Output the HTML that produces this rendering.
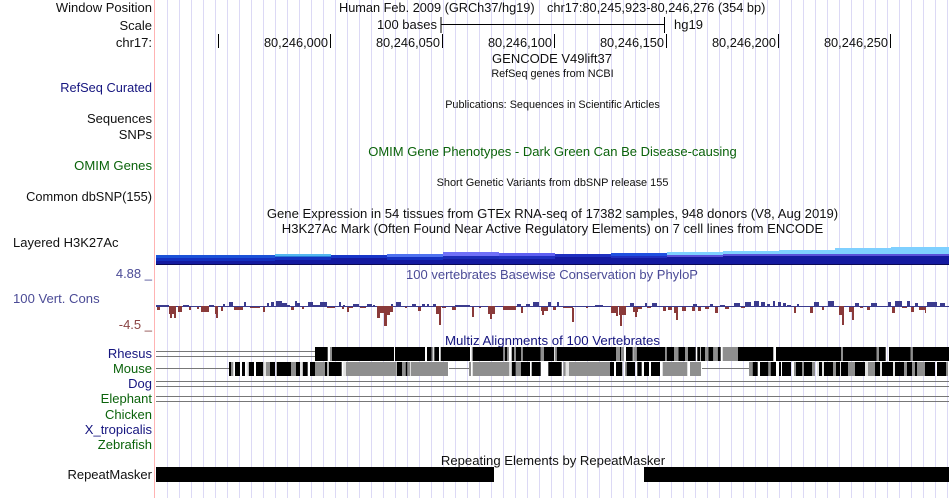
<!DOCTYPE html>
<html><head><meta charset="utf-8"><style>
html,body{margin:0;padding:0;background:#fff}
svg{display:block}
text{font-family:"Liberation Sans",sans-serif;font-size:13px;fill:#111}
.r{text-anchor:end}
.m{text-anchor:middle}
.s{font-size:10.85px}
.t{font-size:12.8px}
.h{font-size:12.75px}
.w{font-size:13.1px}
.b{fill:#15157f}
.g{fill:#0b630b}
.v{fill:#4b4b96}
.d{fill:#8a4444}
</style></head><body>
<svg width="950" height="498" viewBox="0 0 950 498" xmlns="http://www.w3.org/2000/svg">
<path stroke="#dcd9f5" stroke-width="1" fill="none" d="M167.5 0V498M179.5 0V498M191.5 0V498M203.5 0V498M215.5 0V498M227.5 0V498M239.5 0V498M251.5 0V498M263.5 0V498M275.5 0V498M287.5 0V498M299.5 0V498M311.5 0V498M323.5 0V498M335.5 0V498M347.5 0V498M359.5 0V498M371.5 0V498M383.5 0V498M395.5 0V498M407.5 0V498M419.5 0V498M431.5 0V498M443.5 0V498M455.5 0V498M467.5 0V498M479.5 0V498M491.5 0V498M503.5 0V498M515.5 0V498M527.5 0V498M539.5 0V498M551.5 0V498M563.5 0V498M575.5 0V498M587.5 0V498M599.5 0V498M611.5 0V498M623.5 0V498M635.5 0V498M647.5 0V498M659.5 0V498M671.5 0V498M683.5 0V498M695.5 0V498M707.5 0V498M719.5 0V498M731.5 0V498M743.5 0V498M755.5 0V498M767.5 0V498M779.5 0V498M791.5 0V498M803.5 0V498M815.5 0V498M827.5 0V498M839.5 0V498M851.5 0V498M863.5 0V498M875.5 0V498M887.5 0V498M899.5 0V498M911.5 0V498M923.5 0V498M935.5 0V498M947.5 0V498"/>
<rect x="154" y="0" width="1" height="498" fill="#ffb3b3"/>

<text class="r" x="152" y="12">Window Position</text>
<text class="r" x="152" y="30">Scale</text>
<text class="r" x="152" y="47">chr17:</text>
<text class="h" x="339" y="12">Human Feb. 2009 (GRCh37/hg19)</text>
<text class="h" x="547" y="12">chr17:80,245,923-80,246,276 (354 bp)</text>
<text class="r" x="437" y="29">100 bases</text>
<text x="674" y="29">hg19</text>
<path stroke="#000" fill="none" d="M441 17V33M441 24.500H664M664.500 17V33M218.500 34V48M330.500 34V48M442.500 34V48M554.500 34V48M666.500 34V48M778.500 34V48M890.500 34V48"/>
<text class="r t" x="328" y="47">80,246,000</text>
<text class="r t" x="440" y="47">80,246,050</text>
<text class="r t" x="552" y="47">80,246,100</text>
<text class="r t" x="664" y="47">80,246,150</text>
<text class="r t" x="776" y="47">80,246,200</text>
<text class="r t" x="888" y="47">80,246,250</text>

<text class="m" x="552" y="63">GENCODE V49lift37</text>
<text class="m s" x="552.500" y="77">RefSeq genes from NCBI</text>
<text class="r b t" x="152" y="92">RefSeq Curated</text>
<text class="m s" x="552.500" y="108">Publications: Sequences in Scientific Articles</text>
<text class="r" x="152" y="123">Sequences</text>
<text class="r" x="152" y="139">SNPs</text>
<text class="m g" x="552.500" y="156">OMIM Gene Phenotypes - Dark Green Can Be Disease-causing</text>
<text class="r g w" x="152" y="170">OMIM Genes</text>
<text class="m s" x="552.500" y="186" style="font-size:10.95px">Short Genetic Variants from dbSNP release 155</text>
<text class="r t" x="152" y="201">Common dbSNP(155)</text>
<text class="m w" x="552.500" y="218">Gene Expression in 54 tissues from GTEx RNA-seq of 17382 samples, 948 donors (V8, Aug 2019)</text>
<text class="m w" x="552.500" y="233">H3K27Ac Mark (Often Found Near Active Regulatory Elements) on 7 cell lines from ENCODE</text>
<text x="13" y="247">Layered H3K27Ac</text>

<!-- layered track -->
<rect x="156" y="255" width="793" height="9" fill="#141aa0"/>
<path fill="#1c52d8" d="M156 255h119v3h-119z"/>
<path fill="#1430c0" d="M156 258h119v3h-119zM275 257h56v3h-56zM387 257h56v3h-56z"/>
<path fill="#55b8f0" d="M275 254h56v2h-56z"/>
<path fill="#2a7ad8" d="M275 256h56v1h-56z"/>
<path fill="#1836c8" d="M331 255h56v3h-56z"/>
<path fill="#4f72f0" d="M387 254h56v3h-56z"/>
<path fill="#7070f8" d="M443 252h56v4h-56z"/>
<path fill="#1c2cb8" d="M443 256h56v3h-56z"/>
<path fill="#5f60f2" d="M499 253h56v3h-56z"/>
<path fill="#2030c0" d="M499 256h56v3h-56zM555 254h56v3h-56z"/>
<path fill="#2050e0" d="M611 253h56v3h-56z"/>
<path fill="#2030c0" d="M611 256h56v2h-56z"/>
<path fill="#7fd0ff" d="M667 252h56v3h-56zM723 251h56v3h-56zM779 250h56v4h-56zM835 248h56v6h-56zM891 247h58v7h-58z"/>
<path fill="#5a50d8" d="M667 255h56v2h-56zM723 254h56v2h-56zM779 254h56v2h-56zM835 254h56v2h-56zM891 254h58v2h-58z"/>
<rect x="156" y="264" width="793" height="1" fill="#0a0a55"/>

<text class="r v" x="152" y="278">4.88 _</text>
<text class="m v" x="552" y="279">100 vertebrates Basewise Conservation by PhyloP</text>
<text class="v w" x="13" y="303">100 Vert. Cons</text>
<text class="r d" x="152" y="329">-4.5 _</text>

<!-- wiggle baseline -->
<rect x="156" y="306" width="793" height="1" fill="#3b3b8e"/>
<!-- wiggle blue -->
<path fill="#3b3b8e" d="M156 305h13v2h-13zM176 306h3v1h-3zM183 305h6v2h-6zM192 306h7v1h-7zM200 306h4v1h-4zM209 305h5v2h-5zM219 306h4v1h-4zM223 304h2v3h-2zM229 302h4v5h-4zM233 306h11v1h-11zM244 302h2v5h-2zM247 306h18v1h-18zM267 303h2v4h-2zM271 302h3v5h-3zM276 301h6v6h-6zM282 303h5v4h-5zM287 305h3v2h-3zM295 301h2v6h-2zM297 303h3v4h-3zM302 306h3v1h-3zM308 302h5v5h-5zM313 305h7v2h-7zM320 302h7v5h-7zM339 302h2v5h-2zM343 305h2v2h-2zM353 304h6v3h-6zM367 304h5v3h-5zM373 305h2v2h-2zM391 304h2v3h-2zM396 302h5v5h-5zM403 306h6v1h-6zM412 304h4v3h-4zM422 304h3v3h-3zM427 304h2v3h-2zM433 304h3v3h-3zM447 306h5v1h-5zM455 305h15v2h-15zM477 306h6v1h-6zM517 304h4v3h-4zM526 304h4v3h-4zM533 302h6v5h-6zM548 302h3v5h-3zM552 306h3v1h-3zM557 302h2v5h-2zM580 306h7v1h-7zM595 305h8v2h-8zM605 306h5v1h-5zM630 303h4v4h-4zM645 303h2v4h-2zM652 303h5v4h-5zM660 306h2v1h-2zM665 306h3v1h-3zM680 306h5v1h-5zM693 304h4v3h-4zM710 304h3v3h-3zM720 305h5v2h-5zM734 303h6v4h-6zM745 302h6v5h-6zM754 301h5v6h-5zM761 302h4v5h-4zM767 304h3v3h-3zM773 301h2v6h-2zM778 302h3v5h-3zM783 303h3v4h-3zM787 305h4v2h-4zM797 304h2v3h-2zM800 306h7v1h-7zM814 302h5v5h-5zM828 301h6v6h-6zM855 303h4v4h-4zM871 303h6v4h-6zM879 306h7v1h-7zM888 302h3v5h-3zM895 301h7v6h-7zM907 301h3v6h-3zM915 303h3v4h-3zM927 302h10v5h-10zM940 303h5v4h-5zM947 306h2v1h-2z"/>
<!-- wiggle red -->
<path fill="#8a3a3a" d="M157 307h3v3h-3zM169 306h7v8h-7zM170 314h2v4h-2zM174 314h2v4h-2zM178 306h4v6h-4zM189 307h2v3h-2zM197 307h2v2h-2zM201 306h8v6h-8zM215 306h3v8h-3zM216 314h2v4h-2zM221 307h2v4h-2zM234 307h9v3h-9zM250 307h10v1h-10zM263 307h2v5h-2zM291 307h3v3h-3zM302 307h2v2h-2zM327 307h8v1h-8zM342 307h2v2h-2zM347 307h2v5h-2zM349 307h4v1h-4zM360 307h6v1h-6zM377 306h3v12h-3zM380 306h4v7h-4zM384 306h3v20h-3zM387 306h3v9h-3zM390 306h3v6h-3zM405 307h2v1h-2zM418 307h3v4h-3zM436 306h5v8h-5zM439 314h2v11h-2zM442 307h4v1h-4zM452 307h4v3h-4zM472 307h2v10h-2zM479 307h2v1h-2zM488 306h7v8h-7zM490 314h2v5h-2zM503 306h13v4h-13zM521 307h2v6h-2zM541 307h7v4h-7zM542 311h2v4h-2zM553 307h3v3h-3zM563 307h10v1h-10zM572 308h2v14h-2zM586 307h2v1h-2zM611 306h7v7h-7zM616 313h2v3h-2zM619 306h7v9h-7zM620 315h2v11h-2zM633 307h5v5h-5zM635 312h2v5h-2zM638 307h4v2h-4zM647 307h4v1h-4zM663 307h3v4h-3zM668 307h4v3h-4zM674 307h4v6h-4zM676 313h2v7h-2zM682 307h4v4h-4zM692 307h3v4h-3zM698 307h3v4h-3zM705 307h4v2h-4zM715 307h3v6h-3zM725 307h4v2h-4zM741 307h4v1h-4zM794 307h2v6h-2zM810 307h3v6h-3zM822 307h2v3h-2zM839 306h5v9h-5zM842 315h2v10h-2zM849 307h3v5h-3zM852 307h2v13h-2zM860 307h3v1h-3zM867 307h3v3h-3zM892 307h3v6h-3zM902 307h5v1h-5zM911 307h3v5h-3zM919 307h6v3h-6zM925 307h1v6h-1z"/>

<text class="m b" x="552.500" y="345" style="font-size:13.25px">Multiz Alignments of 100 Vertebrates</text>
<text class="r b" x="152" y="358">Rhesus</text>
<text class="r g" x="152" y="373">Mouse</text>
<text class="r b" x="152" y="388">Dog</text>
<text class="r g" x="152" y="403">Elephant</text>
<text class="r g" x="152" y="419">Chicken</text>
<text class="r b" x="152" y="434">X_tropicalis</text>
<text class="r g" x="152" y="449">Zebrafish</text>

<path stroke="#777" stroke-width="1" fill="none" d="M156 351.500H315M156 356.500H315M156 368.500H229M449 368.500H469M702 368.500H749M156 381.500H949M156 386.500H949M156 396.500H949M156 401.500H949"/>
<!-- rhesus -->
<path stroke="#000" stroke-width="14" fill="none" d="M315 354H327.700M332 354H394M395 354H425M427 354H431.700M434.300 354H439M440.700 354H470M472.700 354H503.300M505 354H507.300M511.700 354H514M516 354H521M522.700 354H540.700M544 354H554M556.700 354H616M620 354H621M626 354H632.700M636.700 354H665M666.700 354H674M678.300 354H685M688 354H695.700M697.300 354H700M700.700 354H705M708.300 354H713.300M717.700 354H720.700M738 354H773.300M776 354H841M843 354H876.700M879 354H885.700M889 354H910.700M912.700 354H949"/>
<path stroke="#8f8f8f" stroke-width="14" fill="none" d="M330 354H332M431.700 354H433.300M471.700 354H472.700M503.300 354H505M507.300 354H509M514 354H516M521 354H522.700M540.700 354H544M554.700 354H556.700M616 354H620M621 354H624M633.300 354H636.700M665 354H666.700M674 354H678.300M685 354H688M705 354H708.300M713.300 354H717.700M722.700 354H738M841 354H843M876.700 354H879M910.700 354H912.700"/>
<!-- mouse -->
<path stroke="#8f8f8f" stroke-width="14" fill="none" d="M231 369H233.300M266 369H270M291 369H296M315 369H325M346 369H396.700M402 369H405.700M407.300 369H410M410.700 369H448M469 369H471M472.700 369H509.300M515.700 369H521M563.300 369H565.700M569 369H610M625 369H626.700M662.700 369H687.300M690 369H701M749 369H752.700M768.300 369H770.700M794 369H796M802 369H804M812 369H815M833 369H836M848 369H855M868 369H875M904 369H907M912 369H915M917 369H925M946 369H948"/>
<path stroke="#000" stroke-width="14" fill="none" d="M229 369H231M235 369H240M242 369H245M248.700 369H254M256 369H263.300M270 369H275M276.700 369H291M296 369H300M302.700 369H307.700M310 369H315M325 369H327.300M328.700 369H334.300M334.300 369H341.700M397 369H402M405.700 369H407.300M511.700 369H515.700M521 369H530M531.700 369H540.700M548.300 369H561.700M610 369H614M616 369H622.300M626.700 369H635M637.300 369H641.700M644 369H649M651 369H660M752.700 369H757.700M760 369H768.300M770.700 369H776M779 369H781M782 369H791M796 369H802M804 369H812M819 369H822M824 369H833M836 369H840M841 369H848M855 369H865M875 369H880M882 369H893M895 369H904M907 369H912M915 369H917M925 369H935M937 369H946"/>
<path stroke="#e2e2e2" stroke-width="14" fill="none" d="M246.700 369H248.700M263.300 369H266M300 369H302.700M343.300 369H346M509.300 369H511.700M565.700 369H569M817 369H819M822 369H824M840 369H841M865 369H868M880 369H882M893 369H895"/>

<text class="m w" x="553" y="465">Repeating Elements by RepeatMasker</text>
<text class="r" x="152" y="479">RepeatMasker</text>
<rect x="156" y="467" width="338" height="15" fill="#000"/>
<rect x="644" y="467" width="305" height="15" fill="#000"/>
</svg>
</body></html>
